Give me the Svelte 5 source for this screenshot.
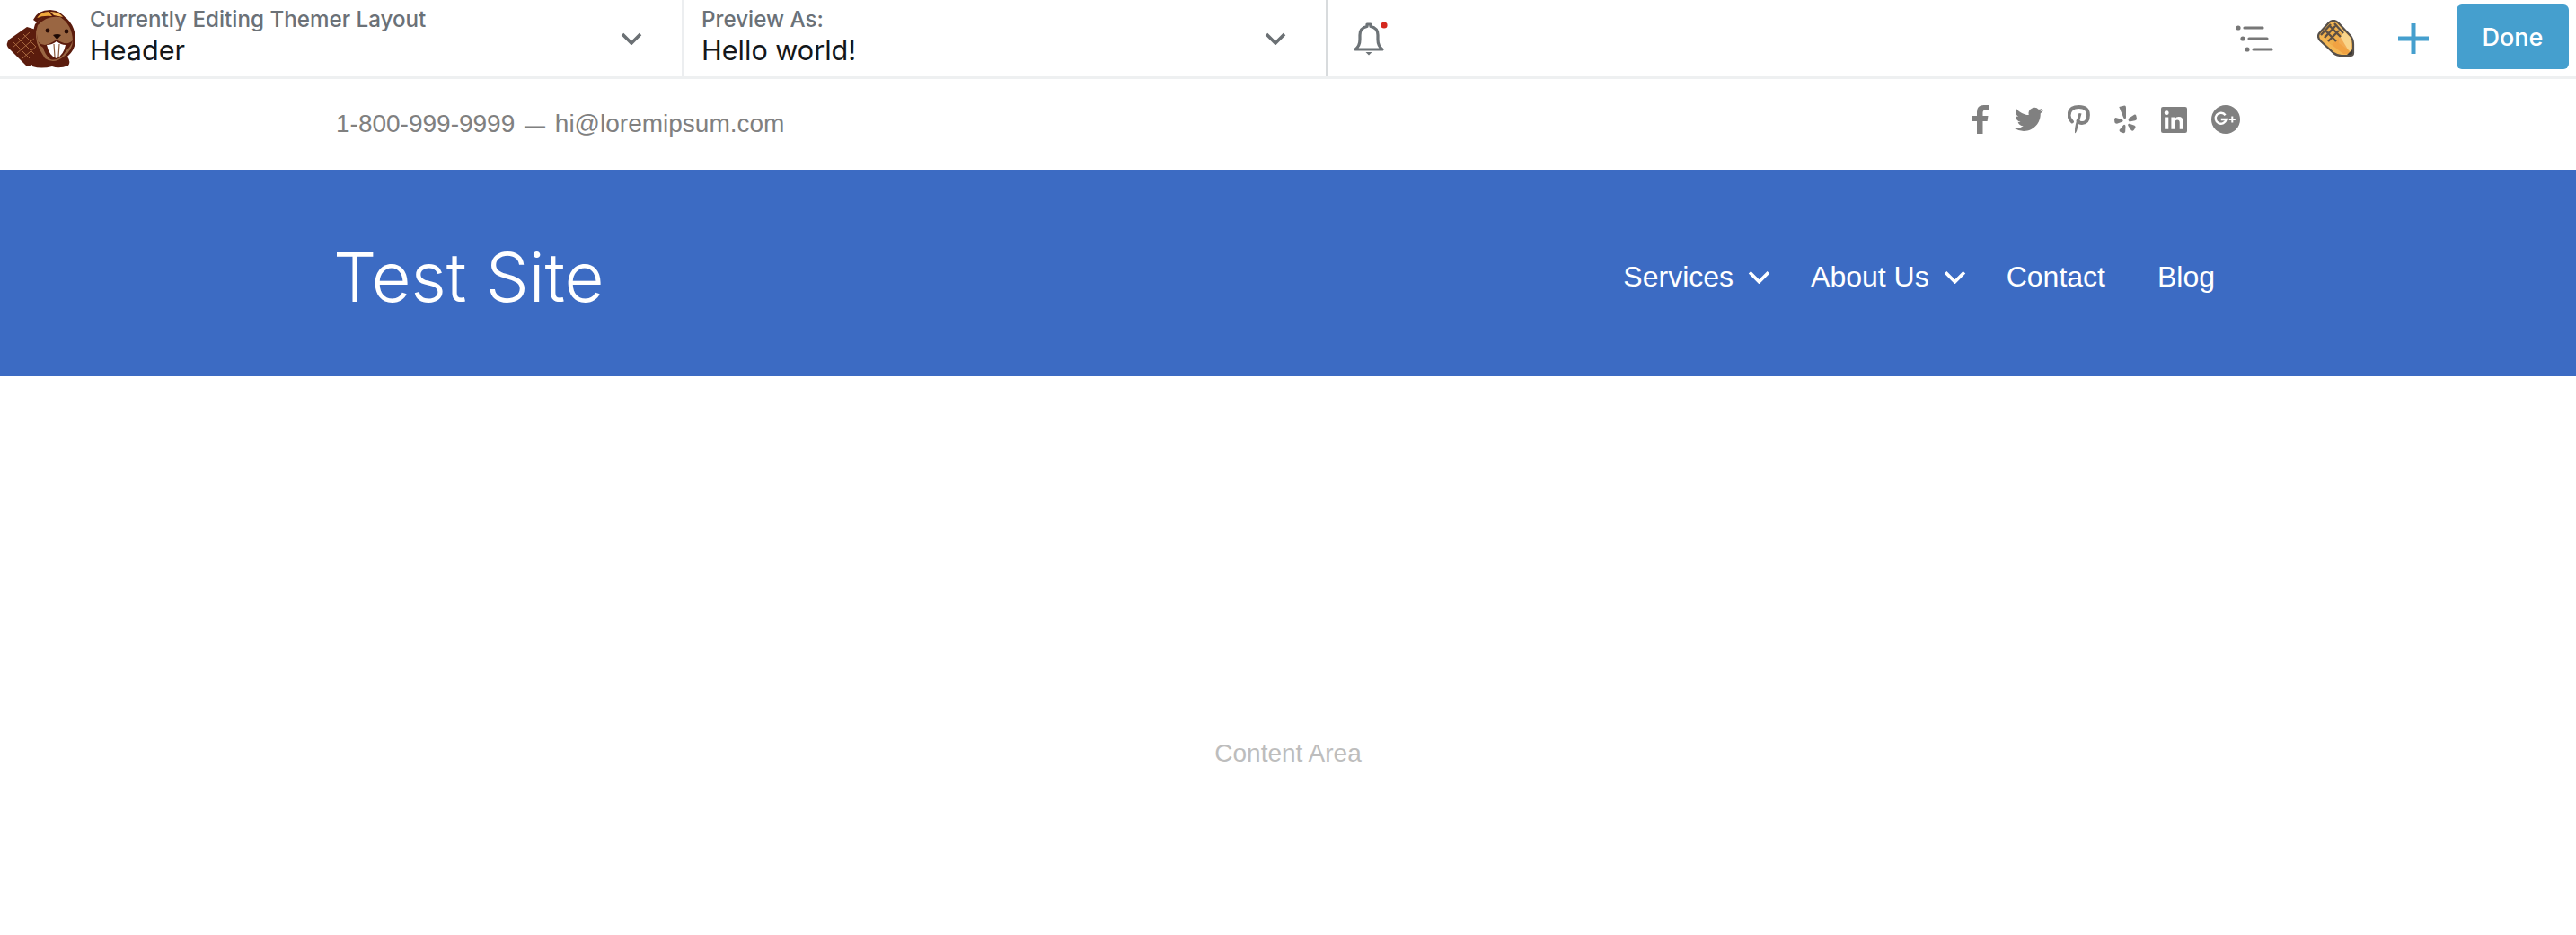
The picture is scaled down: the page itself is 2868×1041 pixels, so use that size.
<script>
  const links = [
    { label: 'Services', caret: true },
    { label: 'About Us', caret: true },
    { label: 'Contact', caret: false },
    { label: 'Blog', caret: false }
  ];
</script>

<div class="page">
  <header class="bar">
    <div class="sel first">
      <svg class="beaver" viewBox="0 0 90 80" aria-hidden="true">
        <path d="M30 27 L10 41 Q6 46 9 50 L30 71 L46 66 L40 30 Z" fill="#5b1c0d"/>
        <path d="M14 43 L33 62 M20 39 L38 57 M26 35 L40 49 M14 50 L33 33 M19 56 L39 39 M25 62 L41 48" stroke="#a8683f" stroke-width="1" fill="none"/>
        <path d="M36 66 Q41 62 44 58 Q34 38 39 24 Q50 10 68 13 Q84 22 84 42 Q84 52 75 60 Q79 66 76 70 Q66 74 58 71 Q46 74 36 71 Z" fill="#5b1c0d"/>
        <path d="M44 52 Q37 38 42 25 Q52 14 67 16 Q80 24 81 42 Q81 52 71 60 Q60 69 50 62 Z" fill="#9a6642"/>
        <path d="M37 19 Q42 8 56 8 Q70 9 73 19 Q70 19 68 16 Q52 11 41 22 Z" fill="#5b1c0d"/>
        <path d="M41 17 Q46 10 54 10 L58 15 Q48 14 41 17 Z" fill="#f0a93c"/>
        <path d="M56 10 Q66 10 70 16 L60 14 Z" fill="#f6bb5c"/>
        <circle cx="53" cy="31" r="2.4" fill="#2a0d06"/>
        <circle cx="74" cy="32" r="2.4" fill="#2a0d06"/>
        <path d="M59 36 Q64 34 68 36 L63.5 41 Z" fill="#1d0a05"/>
        <path d="M41 35 Q40 46 50 47 Q56 46 63 41 Q70 46 76 45 Q82 43 82 38 Q80 48 74 53 Q66 66 56 63 Q50 58 48 50 Q41 46 41 35 Z" fill="#5b1c0d"/>
        <path d="M52 47 Q58 47 63 43 Q68 47 73 47 Q71 58 63 62 Q55 60 52 47 Z" fill="#fff"/>
        <path d="M60 46 L61 60 M66 46 L65 60" stroke="#8a5a3c" stroke-width="1.2"/>
      </svg>
      <div class="stack">
        <span class="small">Currently Editing Themer Layout</span>
        <span class="big">Header</span>
      </div>
      <svg class="chev" viewBox="0 0 24 14" aria-hidden="true"><path d="M2 2 L12 12 L22 2"/></svg>
    </div>
    <div class="sel second">
      <div class="stack">
        <span class="small">Preview As:</span>
        <span class="big">Hello world!</span>
      </div>
      <svg class="chev" viewBox="0 0 24 14" aria-hidden="true"><path d="M2 2 L12 12 L22 2"/></svg>
    </div>
    <div class="bell">
      <svg viewBox="0 0 40 40" aria-hidden="true">
        <path d="M4 32 Q9 28 9 21 V16 Q9 8 17 6.5 V4 H21 V6.5 Q29 8 29 16 V21 Q29 28 34 32 Z" fill="none" stroke="#6d7377" stroke-width="3.2" stroke-linejoin="round"/>
        <path d="M15.5 35 H22.5 L19 38.5 Z" fill="#6d7377"/>
        <circle cx="36" cy="5" r="3.6" fill="#d5281f"/>
      </svg>
    </div>
    <div class="tools">
      <svg class="list" viewBox="0 0 42 30" aria-hidden="true">
        <circle cx="3" cy="3" r="2.6"/><circle cx="8" cy="15" r="2.6"/><circle cx="13" cy="27" r="2.6"/>
        <path d="M10 3 H30 M15 15 H35 M20 27 H40" stroke="#777" stroke-width="3.2" stroke-linecap="round"/>
      </svg>
      <svg class="pencil" viewBox="0 0 42 42" aria-hidden="true">
        <path d="M3 14 L13 3 Q18 -1 23 3 L37 18 Q40 22 40 27 V37 Q40 40 37 40 H27 Q22 40 18 37 L3 23 Q-1 18 3 14 Z" fill="#f3b653" stroke="#57504a" stroke-width="2.2" stroke-linejoin="round"/>
        <path d="M23 6 L38 21 V36 L24 26 Z" fill="#f9d48a"/>
        <path d="M11 24 L29 38 H37 L25 18 Z" fill="#ef9a3c" opacity=".7"/>
        <path d="M4 15 L15 4 L28 16 L16 28 Z" fill="#eeae4a"/>
        <path d="M8 11 L21 24 M13 6 L26 19 M19 4 L29 15 M15 5 L4 17 M20 7 L8 20 M24 12 L12 24" stroke="#5d5044" stroke-width="2.4" fill="none"/>
        <path d="M33 39 L39 33 V38 Q39 39 38 39 Z" fill="#3e3a36"/>
      </svg>
      <svg class="plus" viewBox="0 0 34 34" aria-hidden="true"><path d="M17 0 V34 M0 17 H34"/></svg>
      <button class="done">Done</button>
    </div>
  </header>

  <section class="topline">
    <div class="contact">1-800-999-9999 <span class="dash">—</span> hi@loremipsum.com</div>
    <div class="social">
      <svg class="s-f" viewBox="0 0 18 32" aria-hidden="true"><path d="M5 32 V18 H0 V12 H5 V7.5 Q5 0 12.5 0 H18 V5.5 H14.5 Q11.5 5.5 11.5 8.5 V12 H17.5 L16.6 18 H11.5 V32 Z"/></svg>
      <svg class="s-t" viewBox="0 0 24 24" aria-hidden="true"><path d="M23.953 4.57a10 10 0 01-2.825.775 4.958 4.958 0 002.163-2.723c-.951.555-2.005.959-3.127 1.184a4.92 4.92 0 00-8.384 4.482C7.69 8.095 4.067 6.13 1.64 3.162a4.822 4.822 0 00-.666 2.475c0 1.71.87 3.213 2.188 4.096a4.904 4.904 0 01-2.228-.616v.06a4.923 4.923 0 003.946 4.827 4.996 4.996 0 01-2.212.085 4.936 4.936 0 004.604 3.417 9.867 9.867 0 01-6.102 2.105c-.39 0-.779-.023-1.17-.067a13.995 13.995 0 007.557 2.209c9.053 0 13.998-7.496 13.998-13.985 0-.21 0-.42-.015-.63A9.935 9.935 0 0024 4.59z"/></svg>
      <svg class="s-p" viewBox="0 0 25 32" aria-hidden="true">
        <path d="M5 18.5 Q1.6 15.5 1.6 11.5 Q1.6 2 12.5 2 Q23 2 23 11 Q23 20 16 20 Q12.5 20 11.5 17.5" fill="none" stroke="#808080" stroke-width="3.8" stroke-linecap="round"/>
        <path d="M12.5 9 L15.5 9.6 L10 29 Q8.5 32 8 31 Q7.6 26 9 21 Z"/>
      </svg>
      <svg class="s-y" viewBox="0 0 26 32" aria-hidden="true">
        <path d="M5.5 1.5 L11.8 0 Q13.5 0 13.5 2 V14 Q13 16.5 10.8 14.5 Z"/>
        <path d="M17 14.5 L23 10.5 Q24.8 10 25.3 11.5 L26 15 Q26 17 24 17.2 L17.5 18.5 Q15.2 17 17 14.5 Z"/>
        <path d="M17.5 21 L23.4 23 Q25 24 24.4 25.5 L22.5 28.5 Q21 30 19.5 28.5 L15.8 23 Q15.5 20.5 17.5 21 Z"/>
        <path d="M10.5 22.5 L11.5 22 Q13 22 13 24 L12.7 30 Q12.4 32 10.5 31.8 L7 30.5 Q5.2 29.5 6 28 Z"/>
        <path d="M9.5 18.5 L3 21 Q0.6 21 0.4 19.5 L0 16 Q0.5 13.5 2.5 14.2 L9 16 Q11 17.5 9.5 18.5 Z"/>
      </svg>
      <svg class="s-l" viewBox="0 0 28 28" aria-hidden="true">
        <path fill-rule="evenodd" d="M2 0 H26 Q28 0 28 2 V26 Q28 28 26 28 H2 Q0 28 0 26 V2 Q0 0 2 0 Z M4 11 V24 H8 V11 Z M6 4 A2.4 2.4 0 1 0 6 8.8 A2.4 2.4 0 1 0 6 4 Z M11 11 V24 H15 V17 Q15 14 17.5 14 Q20 14 20 17 V24 H24 V16 Q24 10.6 19 10.6 Q16 10.6 15 12.6 V11 Z"/>
      </svg>
      <svg class="s-g" viewBox="0 0 32 32" aria-hidden="true">
        <circle cx="16" cy="16" r="16"/>
        <path d="M15.6 11.2 A6 6 0 1 0 16.6 16 H10.8" fill="none" stroke="#fff" stroke-width="2.4"/>
        <path d="M23.3 12.5 V19.5 M19.8 16 H26.8" stroke="#fff" stroke-width="2"/>
      </svg>
    </div>
  </section>

  <section class="hero">
    <div class="brand">Test Site</div>
    <nav class="nav">
      {#each links as link}
        <a href="#top" class="link">
          {link.label}
          {#if link.caret}
            <svg viewBox="0 0 24 14" aria-hidden="true"><path d="M2 2 L12 12 L22 2"/></svg>
          {/if}
        </a>
      {/each}
    </nav>
  </section>

  <main class="content">Content Area</main>
</div>

<style>
  :global(body) { margin: 0; background: #fff; }
  .page { width: 2868px; height: 1041px; overflow: hidden; font-family: "Liberation Sans", Arial, sans-serif; }

  .bar { display: flex; height: 85px; border-bottom: 3px solid #eef0f1; background: #fff; font-family: Inter, "Liberation Sans", sans-serif; }
  .sel { display: flex; align-items: center; box-sizing: border-box; height: 85px; }
  .first { width: 761px; padding: 0 44px 0 0; border-right: 2px solid #eceef0; }
  .second { width: 718px; padding: 0 44px 0 20px; border-right: 3px solid #d8dbdd; }
  .beaver { width: 90px; height: 80px; margin-right: 10px; flex: none; }
  .stack { display: flex; flex-direction: column; flex: 1; gap: 2px; margin-top: -4px; }
  .small { font-size: 24.2px; line-height: 28px; font-weight: 500; color: #6b7177; }
  .big { font-size: 30.6px; line-height: 36px; color: #14171a; }
  .chev { width: 24px; height: 14px; flex: none; fill: none; stroke: #6b7074; stroke-width: 3.6; }
  .bell { display: flex; align-items: center; padding-left: 26px; }
  .bell svg { width: 40px; height: 40px; }
  .tools { display: flex; align-items: center; margin-left: auto; padding-right: 8px; }
  .list { width: 42px; height: 30px; fill: #777; margin-right: 49px; }
  .pencil { width: 42px; height: 42px; margin-right: 48px; }
  .plus { width: 34px; height: 34px; fill: none; stroke: #459fce; stroke-width: 5; margin-right: 31px; }
  .done { width: 125px; height: 72px; margin-bottom: 3px; border: 0; border-radius: 6px; background: #459fce; color: #fff; font: 500 27px Inter, "Liberation Sans", sans-serif; }

  .topline { display: flex; justify-content: space-between; box-sizing: border-box; height: 101px; padding: 0 374px; }
  .contact { font-size: 28px; line-height: 32px; color: #808080; padding-top: 34px; white-space: pre; word-spacing: 3px; }
  .dash { font-size: 23px; }
  .social { display: flex; align-items: flex-start; padding-top: 29px; }
  .social svg { fill: #808080; display: block; flex: none; }
  .s-f { width: 18px; height: 32px; margin-right: 29px; }
  .s-t { width: 32px; height: 32px; margin-right: 27px; }
  .s-p { width: 25px; height: 32px; margin-right: 27px; }
  .s-y { width: 25px; height: 32px; margin-right: 27px; }
  .s-l { width: 29px; height: 29px; margin: 2px 27px 0 0; }
  .s-g { width: 32px; height: 32px; }

  .hero { display: flex; justify-content: space-between; align-items: flex-start; box-sizing: border-box; height: 230px; padding: 0 402px 0 371px; background: #3c6bc3; color: #fff; }
  .brand { font-family: Inter, sans-serif; font-weight: 300; font-size: 76px; line-height: 90px; padding-top: 74px; }
  .nav { display: flex; padding-top: 97px; }
  .link { display: flex; align-items: center; height: 44px; font-size: 32px; color: #fff; text-decoration: none; margin-left: 58px; }
  .link:nth-child(-n+2) { margin-left: 0; margin-right: 45px; }
  .link:nth-child(3) { margin-left: 0; }
  .link svg { width: 25px; height: 15px; margin-left: 16px; fill: none; stroke: #fff; stroke-width: 3.6; }

  .content { height: 622px; box-sizing: border-box; padding-top: 390px; text-align: center; font-size: 28px; line-height: 60px; color: #bdbdbd; }
</style>
